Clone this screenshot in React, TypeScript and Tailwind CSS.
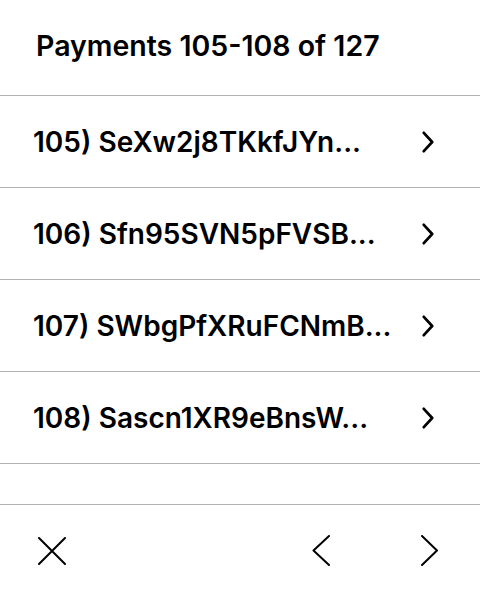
const payments = [
  { n: 105, id: "SeXw2j8TKkfJYn..." },
  { n: 106, id: "Sfn95SVN5pFVSB..." },
  { n: 107, id: "SWbgPfXRuFCNmB..." },
  { n: 108, id: "Sascn1XR9eBnsW..." },
];

function SmallChevron() {
  return (
    <svg width="12" height="22" viewBox="0 0 12 22" fill="none">
      <path d="M1.8 1.8 L10.2 11 L1.8 20.2" stroke="black" strokeWidth="2.7" strokeLinecap="round" strokeLinejoin="round" />
    </svg>
  );
}

export default function App() {
  return (
    <div className="flex h-[600px] w-[480px] flex-col bg-white font-['Inter',sans-serif] text-black">
      <header className="flex h-[96px] shrink-0 items-center border-b border-[#b3b3b3] px-[36px] pb-[2px]">
        <h1 className="text-[28.5px] font-semibold">Payments 105-108 of 127</h1>
      </header>

      <ul className="flex flex-col">
        {payments.map((p) => (
          <li key={p.n} className="flex h-[92px] items-center justify-between border-b border-[#b3b3b3] pl-[33px] pr-[46px]">
            <span className="text-[28px] font-semibold">
              {p.n}) {p.id}
            </span>
            <SmallChevron />
          </li>
        ))}
      </ul>

      <div className="h-[41px] shrink-0 border-b border-[#b3b3b3]" />

      <footer className="flex flex-1 items-center px-[38px] pb-[4px]">
        <svg width="28" height="28" viewBox="0 0 28 28" fill="none">
          <path d="M1 1 L27 27 M27 1 L1 27" stroke="black" strokeWidth="2" strokeLinecap="round" />
        </svg>
        <div className="ml-auto flex items-center gap-[91px] pr-[4px]">
          <svg width="18" height="31" viewBox="0 0 18 31" fill="none">
            <path d="M17 1 L1.5 15.5 L17 30" stroke="black" strokeWidth="2" strokeLinecap="round" strokeLinejoin="round" />
          </svg>
          <svg width="17" height="31" viewBox="0 0 17 31" fill="none">
            <path d="M1 1 L16 15.5 L1 30" stroke="black" strokeWidth="2" strokeLinecap="round" strokeLinejoin="round" />
          </svg>
        </div>
      </footer>
    </div>
  );
}
